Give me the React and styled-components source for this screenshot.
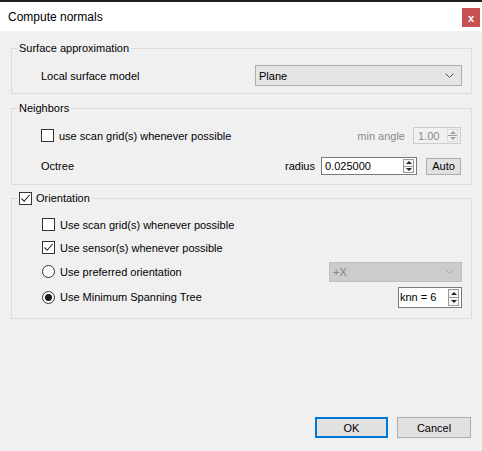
import React from 'react';
import styled, { createGlobalStyle } from 'styled-components';

const GlobalStyle = createGlobalStyle`
  html, body {
    margin: 0;
    padding: 0;
    background: #f0f0f0;
  }
  body {
    font-family: "Liberation Sans", Arial, sans-serif;
    font-size: 11px;
    color: #000;
  }
`;

const Window = styled.div`
  width: 482px;
  height: 451px;
  display: flex;
  flex-direction: column;
  background: #f0f0f0;
  overflow: hidden;
`;

const TopStrip = styled.div`
  height: 2px;
  background: #1e1e1e;
`;

const TitleBar = styled.div`
  height: 29px;
  background: #fff;
  display: flex;
  align-items: center;
  justify-content: space-between;
  padding: 0 2px 0 8px;
  font-size: 12px;
`;

const CloseButton = styled.div`
  width: 18px;
  height: 19px;
  margin-top: 2px;
  background: #c75050;
  color: #fff;
  font-weight: bold;
  font-size: 11px;
  display: flex;
  align-items: center;
  justify-content: center;
`;

const Body = styled.div`
  flex: 1;
  display: flex;
  flex-direction: column;
  padding: 10px 10px 0 11px;
`;

const Group = styled.fieldset`
  margin: ${({ $top }) => $top}px 0 0 0;
  border: 1px solid #dcdcdc;
  padding: ${({ $pad }) => $pad};
  min-width: 0;
`;

const Legend = styled.legend`
  margin-left: 5px;
  padding: 0 2px;
  height: 14px;
  line-height: 14px;
  display: flex;
  align-items: center;
  gap: 4px;
`;

const Rows = styled.div`
  display: flex;
  flex-direction: column;
  gap: ${({ $gap }) => $gap || 0}px;
  padding-left: ${({ $indent }) => $indent}px;
`;

const Row = styled.div`
  height: ${({ $h }) => $h}px;
  display: flex;
  align-items: center;
  justify-content: space-between;
`;

const Side = styled.div`
  display: flex;
  align-items: center;
  gap: ${({ $gap }) => $gap}px;
`;

const Label = styled.span`
  color: ${({ $disabled }) => ($disabled ? '#8b8b8b' : '#000')};
  white-space: nowrap;
`;

const Box = styled.span`
  width: 13px;
  height: 13px;
  box-sizing: border-box;
  border: 1px solid #333;
  background: #fff;
  display: inline-flex;
  align-items: center;
  justify-content: center;
  flex: none;
`;

const Radio = styled(Box)`
  border-radius: 50%;
  &::after {
    content: '';
    width: 7px;
    height: 7px;
    border-radius: 50%;
    background: ${({ $on }) => ($on ? '#1a1a1a' : 'transparent')};
  }
`;

const Combo = styled.div`
  width: ${({ $w }) => $w}px;
  height: ${({ $h }) => $h}px;
  box-sizing: border-box;
  border: 1px solid ${({ $disabled }) => ($disabled ? '#bfbfbf' : '#adadad')};
  background: ${({ $disabled }) => ($disabled ? '#cccccc' : '#e5e5e5')};
  color: ${({ $disabled }) => ($disabled ? '#838383' : '#000')};
  display: flex;
  align-items: center;
  justify-content: space-between;
  padding: 0 7px 0 3px;
`;

const Spin = styled.div`
  width: ${({ $w }) => $w}px;
  height: ${({ $h }) => $h}px;
  box-sizing: border-box;
  border: 1px solid ${({ $disabled }) => ($disabled ? '#cccccc' : '#7a7a7a')};
  background: ${({ $disabled }) => ($disabled ? '#f0f0f0' : '#fff')};
  color: ${({ $disabled }) => ($disabled ? '#8b8b8b' : '#000')};
  display: flex;
  align-items: center;
  justify-content: space-between;
  padding: 1px 2px 1px ${({ $pl }) => $pl}px;
`;

const Arrows = styled.div`
  width: 11px;
  height: 100%;
  box-sizing: border-box;
  border: 1px solid ${({ $disabled }) => ($disabled ? '#d9d9d9' : '#9a9a9a')};
  background: ${({ $disabled }) => ($disabled ? '#f0f0f0' : '#f5f5f5')};
  display: flex;
  flex-direction: column;
`;

const ArrowHalf = styled.div`
  flex: 1;
  display: flex;
  align-items: center;
  justify-content: center;
  & + & {
    border-top: 1px solid ${({ $disabled }) => ($disabled ? '#d9d9d9' : '#9a9a9a')};
  }
  &::after {
    content: '';
    border-left: 3px solid transparent;
    border-right: 3px solid transparent;
    ${({ $dir, $disabled }) =>
      $dir === 'up'
        ? `border-bottom: 3px solid ${$disabled ? '#a0a0a0' : '#222'};`
        : `border-top: 3px solid ${$disabled ? '#a0a0a0' : '#222'};`}
  }
`;

const Button = styled.div`
  width: ${({ $w }) => $w}px;
  height: ${({ $h }) => $h || 21}px;
  margin-left: ${({ $ml }) => $ml || 0}px;
  box-sizing: border-box;
  border: ${({ $primary }) => ($primary ? '2px solid #0078d7' : '1px solid #adadad')};
  background: #e1e1e1;
  display: flex;
  align-items: center;
  justify-content: center;
`;

const Footer = styled.div`
  margin-top: auto;
  display: flex;
  justify-content: flex-end;
  gap: 9px;
  padding: 0 1px 13px 0;
`;

const Check = ({ on }) => (
  <Box>
    {on && (
      <svg width="11" height="11" viewBox="0 0 11 11">
        <polyline points="1.5,5.5 4.2,8.3 9.5,2" fill="none" stroke="#222" strokeWidth="1.1" />
      </svg>
    )}
  </Box>
);

const Chevron = ({ color }) => (
  <svg width="9" height="5" viewBox="0 0 9 5">
    <polyline points="0.5,0.5 4.5,4.5 8.5,0.5" fill="none" stroke={color} strokeWidth="1" />
  </svg>
);

const SpinArrows = ({ disabled }) => (
  <Arrows $disabled={disabled}>
    <ArrowHalf $dir="up" $disabled={disabled} />
    <ArrowHalf $dir="down" $disabled={disabled} />
  </Arrows>
);

export default function App() {
  return (
    <>
      <GlobalStyle />
      <Window>
        <TopStrip />
        <TitleBar>
          <span>Compute normals</span>
          <CloseButton>x</CloseButton>
        </TitleBar>
        <Body>
          <Group $top={0} $pad="10px 9px 7px 0">
            <Legend>Surface approximation</Legend>
            <Rows $indent={29}>
              <Row $h={21}>
                <Label>Local surface model</Label>
                <Combo $w={207} $h={21}>
                  <span>Plane</span>
                  <Chevron color="#555" />
                </Combo>
              </Row>
            </Rows>
          </Group>

          <Group $top={7} $pad="12px 10px 9px 0">
            <Legend>Neighbors</Legend>
            <Rows $gap={13} $indent={29}>
              <Row $h={17}>
                <Side $gap={5}>
                  <Check />
                  <Label>use scan grid(s) whenever possible</Label>
                </Side>
                <Side $gap={8}>
                  <Label $disabled>min angle</Label>
                  <Spin $w={48} $h={17} $pl={4} $disabled>
                    <span>1.00</span>
                    <SpinArrows disabled />
                  </Spin>
                </Side>
              </Row>
              <Row $h={18}>
                <Label>Octree</Label>
                <Side $gap={6}>
                  <Label>radius</Label>
                  <Spin $w={96} $h={18} $pl={3}>
                    <span>0.025000</span>
                    <SpinArrows />
                  </Spin>
                  <Button $w={35} $h={17} $ml={3}>Auto</Button>
                </Side>
              </Row>
            </Rows>
          </Group>

          <Group $top={6} $pad="8px 9px 8px 0">
            <Legend>
              <Check on />
              <span>Orientation</span>
            </Legend>
            <Rows $indent={30}>
              <Row $h={23}>
                <Side $gap={5}>
                  <Check />
                  <Label>Use scan grid(s) whenever possible</Label>
                </Side>
              </Row>
              <Row $h={23}>
                <Side $gap={5}>
                  <Check on />
                  <Label>Use sensor(s) whenever possible</Label>
                </Side>
              </Row>
              <Row $h={25}>
                <Side $gap={5}>
                  <Radio />
                  <Label>Use preferred orientation</Label>
                </Side>
                <Combo $w={133} $h={20} $disabled>
                  <span>+X</span>
                  <Chevron color="#aaa" />
                </Combo>
              </Row>
              <Row $h={26}>
                <Side $gap={5}>
                  <Radio $on />
                  <Label>Use Minimum Spanning Tree</Label>
                </Side>
                <Spin $w={64} $h={21} $pl={1}>
                  <span>knn = 6</span>
                  <SpinArrows />
                </Spin>
              </Row>
            </Rows>
          </Group>

          <Footer>
            <Button $w={73} $primary>OK</Button>
            <Button $w={74}>Cancel</Button>
          </Footer>
        </Body>
      </Window>
    </>
  );
}
